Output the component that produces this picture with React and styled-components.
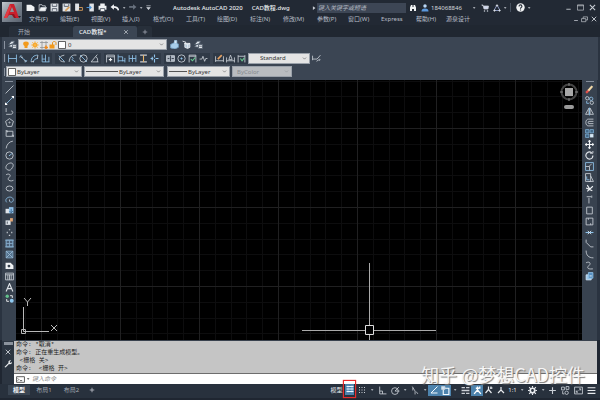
import React from "react";
import styled, { createGlobalStyle, css } from "styled-components";

const c = {
  frame: "#1f2631",
  title: "#222934",
  tabs: "#202731",
  panel: "#3b4553",
  rail: "#38424f",
  ink: "#c9ced5",
  blue: "#8fc3ea",
  dim: "#a3aab4",
  field: "#e4e4e4",
};

const Global = createGlobalStyle`
  *, *::before, *::after { box-sizing: border-box; }
  body { margin: 0; background: ${c.frame}; font-family: "Noto Sans", "Noto Sans CJK SC", sans-serif; }
  button, input, select { font: inherit; color: inherit; margin: 0; padding: 0; border: 0; background: none; border-radius: 0; outline: 0; }
`;

/* ---------- icon drawings, 16 x 16 grid ---------- */
const B = c.blue;
const glyphs = {
  caret: <path d="M5 6h7l-3.5 4z" fill="currentColor" stroke="none" />,
  chevron: <path d="M3 5l5 5 5-5" />,
  play: <path d="M5 3l7 5-7 5z" fill="currentColor" stroke="none" />,
  new: <path d="M1 3h8l6 4v7H1z" fill="#f0f2f4" stroke="none" />,
  open: <><path d="M2 13V3h5l1 2h5v3" /><path d="M2 14l3-6h10l-2 6z" fill="#f0f2f4" /></>,
  save: <><path d="M1 1h14v14H1z" fill="#dfe3e8" stroke="none" /><path d="M4 2v4h8V2M4 14v-4h8v4" stroke="#46505e" /></>,
  saveas: <><path d="M1 1h14v14H1z" fill="#dfe3e8" stroke="none" /><path d="M4 2v4h8V2" stroke="#46505e" /><path d="M6 14l7-7" stroke="#d9a15a" strokeWidth="3" /></>,
  mobileOpen: <><path d="M2 1h7v13H2z" fill="#dfe3e8" stroke="none" /><path d="M7 13h8V8H9" stroke="#e0a25c" /></>,
  mobileSave: <><path d="M6 1h8v14H6z" fill="#dfe3e8" stroke="none" /><path d="M1 8h8M6 5l3 3-3 3" stroke="#4c93d6" strokeWidth="2" /></>,
  print: <><path d="M4 1h8v4H4z M1 5h14v7H1z" fill="#f0f2f4" stroke="none" /><path d="M4 10h8v5H4z" fill="#fff" stroke="#46505e" /></>,
  undo: <><path d="M1 7l6-5v10z" fill="#f0f2f4" stroke="none" /><path d="M6 7c5 0 8 1 9 6" stroke="#f0f2f4" strokeWidth="3" /></>,
  redo: <><path d="M15 7L9 2v10z" fill="#69727f" stroke="none" /><path d="M10 7H2" stroke="#69727f" strokeWidth="3" /></>,
  customize: <path d="M3 4h10M4 8h8l-4 5z" fill="currentColor" />,
  binoculars: <path d="M2 14V7l2-5h3v4h2V2h3l2 5v7h-4v-4H6v4z" fill="#f0f2f4" stroke="none" />,
  user: <><circle cx="8" cy="4" r="3.5" fill="#b9d6f4" stroke="none" /><path d="M1 15c0-4 2-6 7-6s7 2 7 6z" fill="#5b98dd" stroke="none" /></>,
  cart: <><path d="M1 2h3l2 8h8l1-6H5" fill="#cfd8ee" /><circle cx="7" cy="14" r="1" /><circle cx="13" cy="14" r="1" /></>,
  a360: <><path d="M8 2l6 11H2z" stroke="#aab8e8" /><circle cx="8" cy="3" r="1.5" fill="#fff" /><circle cx="3" cy="13" r="1.5" fill="#fff" /><circle cx="13" cy="13" r="1.5" fill="#fff" /></>,
  help: <><circle cx="8" cy="8" r="7.5" fill="#f0f2f4" stroke="none" /><path d="M5.500 6c0-4 5-3 5 0 0 2-2.500 1.500-2.500 4M8 11.500v2" stroke="#222934" strokeWidth="2" /></>,
  min: <path d="M3 12h10" strokeWidth="2" />,
  max: <><path d="M1 2h14v12H1z" /><path d="M1 4h14" /></>,
  restore: <><path d="M5 6V2h10v7h-4" /><path d="M1 6h10v7H1z" /></>,
  close: <path d="M2 2l12 12M14 2L2 14" strokeWidth="2.4" />,
  x: <path d="M3 3l10 10M13 3L3 13" />,
  plus: <path d="M8 2v12M2 8h12" strokeWidth="2" />,
  layers: <><path d="M1 8l5-6h6l-4 6zM1 12l5-5h7l-5 6z" fill="#dce2e9" stroke="#515c6b" /><path d="M8 8h7v7H8z" fill="#eef1f4" stroke="#515c6b" /><path d="M9 11h5" stroke="#515c6b" /></>,
  bulb: <path d="M8 1c-8 0-6 7-3 9v4h6v-4c3-2 5-9-3-9z" fill="#f29a1c" stroke="none" />,
  sun: <><circle cx="8" cy="8" r="5" fill="#f5a11f" stroke="none" /><path d="M8 0v16M0 8h16M2 2l12 12M14 2L2 14" stroke="#f8b74f" /></>,
  viewport: <><path d="M4 0v16M12 0v16M0 3h16M0 13h16" stroke="#8b8f92" /><path d="M12 9v7M9 13h7" stroke="#f08a1d" strokeWidth="3" /></>,
  lock: <><path d="M7 8V4c0-4 7-4 7 0v4" stroke="#e7941c" strokeWidth="2" /><path d="M1 7h10v8H1z" fill="#f29a1c" stroke="none" /></>,
  swatch: <path d="M1 1h14v14H1z" fill="#fff" stroke="#333" />,
  layerA: <><path d="M1 8l6-3 8 2v6l-6 3-8-2z" fill="#a8cde9" stroke="#6f98b8" /><path d="M8 1h4v5H8z" fill="#dce8f2" stroke="#a8cde9" /></>,
  layerB: <><path d="M5 6h9v7l-4 2-5-2z" fill="#b4c7d8" stroke="#eef1f4" /><path d="M1 2l6 2-3 3M5 6l5 2 4-2M10 8v6" stroke="#eef1f4" /></>,
  dimLinear: <><path d="M1 1v14M15 1v14M1 8h14" stroke={B} /></>,
  dimAligned: <><path d="M1 6l3-4M11 15l3-4M3 5l10 8" stroke={B} /><path d="M3 5l4 1M13 13l-4-1" /></>,
  dimArc: <><path d="M2 14C2 6 7 2 14 2M6 15c0-4 3-7 8-7" stroke={B} /><path d="M2 14l5-1M14 2l-1 6" /></>,
  dimOrd: <><path d="M2 1v13h13M8 1v13M14 5v9M2 9h6" stroke={B} /></>,
  dimRadius: <><path d="M13 2C1 4 1 14 14 14" /><path d="M3 3l10 10" stroke={B} /></>,
  dimJog: <><path d="M2 14C3 5 7 1 15 2" /><path d="M6 4l3 4-2 2 6 4" stroke={B} /></>,
  dimDia: <><circle cx="8" cy="8" r="6.500" /><path d="M2 2l12 12" stroke={B} /></>,
  dimAngle: <path d="M13 1L2 14h13M10 5c4 1 4 6 3 9" />,
  dimQuick: <><path d="M1 15V2h14v13M1 5h14" /><path d="M8 7v6M5 10h6" stroke="#f0f2f4" strokeWidth="2" /></>,
  dimBase: <><path d="M2 1v14M14 7v8M2 5h8v8M2 12h12" stroke={B} /></>,
  dimCont: <><path d="M2 2v12M8 2v12M14 2v12M2 8h12" stroke={B} /></>,
  dimSpace: <><path d="M2 2h12M2 14h12" strokeWidth="2" /><path d="M8 2v12" stroke="#e8b56b" strokeWidth="2" /></>,
  dimBreak: <path d="M1 8h5M10 8h5M8 1v5M8 9v6M4 5v6" stroke={B} strokeWidth="2" />,
  tolerance: <><path d="M1 3h14v10H1z" fill="#aab3bf" /><path d="M8 3v10M10 8h4M3 8h3" stroke="#2c3440" /></>,
  center: <><circle cx="8" cy="8" r="6.500" /><path d="M8 6v4M6 8h4" stroke={B} /></>,
  inspect: <><path d="M2 15V2h12v13M2 4h12" /><path d="M5 9l3 3 5-6" stroke="#68c690" strokeWidth="2" /></>,
  jogged: <path d="M1 9h4l2-5 3 9 2-5h3" />,
  dimEdit: <><path d="M1 4v10M15 4v10M1 12h14" /><path d="M5 9l7-7" stroke="#e4a163" strokeWidth="3" /></>,
  dimText: <path d="M1 6v9M15 6v9M1 12h14M5 10l3-8 3 8z" />,
  dimUpdate: <><path d="M2 2v13M14 2v13M2 4h12" /><path d="M6 8l3 4 4-5" stroke="#68c690" strokeWidth="2" /></>,
  dimStyle: <path d="M1 3v8M1 9h8l6-7M8 13l6-4M13 12l2-2" />,
  line: <path d="M1 15L15 1" />,
  cline: <><path d="M1 15L15 1" stroke={B} /><path d="M1 12v3h3M12 1h3v3" stroke="#fff" strokeWidth="2.4" /></>,
  pline: <path d="M2 2v7M2 13h8c5 0 5-6 1-6" />,
  polygon: <><path d="M8 1l7 5-3 9H4L1 6z" /><circle cx="8" cy="8" r="1" /></>,
  rect: <path d="M2 4h12v9H2zM1 3h3v3M12 11h3v3" />,
  arc: <path d="M2 15C3 8 7 3 14 2" />,
  circle: <><circle cx="8" cy="8" r="6.500" /><path d="M8 8l5-4M7 8h2" stroke={B} /></>,
  revcloud: <path d="M5 14c-6-2-3-9 1-11 7-4 11 2 7 7-2 4-5 6-8 4z" />,
  spline: <path d="M2 3c6-3 10 1 5 5-4 4 2 8 8 5" />,
  ellipse: <ellipse cx="8" cy="8" rx="6" ry="4.500" />,
  earc: <><path d="M3 13C-2 7 7 1 13 5c5 5-2 11-5 6" stroke={B} /><path d="M8 8v3" /></>,
  insert: <><path d="M1 5h7v8H1z" fill="#dfe4ea" stroke="none" /><path d="M7 2h8v11H7z" fill="#8fc0e8" stroke="none" /><path d="M11 5v7M8 9l3 3 3-3" stroke="#38628a" /></>,
  block: <><path d="M1 6h9v8H1z" fill="#dfe4ea" stroke="none" /><path d="M4 8v4" stroke="#38424f" /><path d="M9 2h5v6H9z" fill="#e2a676" stroke="none" /></>,
  point: <path d="M8 2v2M3 8h2M11 8h2M8 12v2" strokeWidth="2.4" />,
  hatch: <><path d="M2 2h12v12H2z" fill="#4c6078" stroke={B} /><path d="M2 8h12M8 2v12M0 2h16M0 14h16" stroke="#86abc9" /></>,
  gradient: <><path d="M2 2h12v12H2z" fill="#54738f" stroke="#86abc9" /><path d="M2 2l12 12M14 2L2 14" stroke="#9fbdd5" /></>,
  region: <><path d="M1 3h9l5 5v6H1z" fill="#f0f2f4" stroke="none" /><circle cx="7" cy="9" r="2.500" fill="#38424f" stroke="none" /></>,
  table: <path d="M1 2h14v12H1zM1 5h14M5 5v9M8 5v9M11 5v9" />,
  mtext: <path d="M2 15L8 1l6 14M4 10h8" stroke="#dfe3e8" strokeWidth="2" />,
  addsel: <><circle cx="4" cy="4" r="3" fill="#63c18b" stroke="none" /><circle cx="12" cy="12" r="3.500" fill="#8fc8f0" stroke="none" /><path d="M9 3h4v4M3 9v4h4" stroke="#fff" /></>,
  erase: <><path d="M2 14l5-5" stroke="#e0524b" strokeWidth="4" /><path d="M6 10l7-8" stroke="#f2d9a8" strokeWidth="4" /></>,
  copy: <><circle cx="4" cy="4" r="3" /><circle cx="11" cy="5" r="3" stroke={B} /><circle cx="12" cy="12" r="3" /><path d="M3 9v4h4" stroke={B} /></>,
  mirror: <><path d="M7 2v11H1zM9 2l6 11H9z" /><path d="M8 1v14" stroke={B} /></>,
  offset: <path d="M15 2H6c-6 0-6 12 0 12h9M15 6H7c-2 0-2 4 0 4h8" />,
  array: <><path d="M1 1h6v6H1zM9 1h6v6H9zM1 9h6v6H1z" fill="#426786" stroke="#79a9cd" /><path d="M9 9h6v6H9z" fill="#d5e7f5" stroke="none" /></>,
  move: <path d="M8 1v14M1 8h14M6 3l2-2 2 2M6 13l2 2 2-2M3 6L1 8l2 2M13 6l2 2-2 2" stroke="#f4f6f8" strokeWidth="2" />,
  rotate: <><path d="M12 3C6-1 0 5 2 10c3 7 12 5 12-2" stroke="#dfe3e8" strokeWidth="2" /><path d="M9 4h5V0" stroke="#dfe3e8" /></>,
  scale: <><path d="M1 1h14v14H1z" stroke={B} /><path d="M1 8h7v7M7 8l5-5" /></>,
  stretch: <><path d="M1 1h9v14H1zM10 5l5 10H6" /><path d="M3 6v6h5" stroke={B} /></>,
  trim: <path d="M4 2l5 8M14 4L4 13M2 7l11 5" stroke="#edf0f3" strokeWidth="2" />,
  extend: <path d="M3 3h8M12 1v4M7 5v10" />,
  breakPt: <path d="M3 2h10v12H3z" />,
  breakAt: <path d="M2 2h12v12H2zM6 2v3M10 11v3" />,
  join: <><path d="M1 8h14" stroke={B} strokeWidth="2" /><path d="M5 5l3 3-3 3M11 5L8 8l3 3" stroke="#dfe9f2" /></>,
  chamfer: <path d="M2 1v5l8 8h5" />,
  fillet: <path d="M2 1c0 8 4 13 13 13" />,
  blend: <path d="M2 3c7-3 9 2 5 5-4 4-3 7 7 6" />,
  explode: <><path d="M2 5h9v9H2z" fill="#9dc8ea" stroke="#cfe4f5" /><path d="M6 1h8v10H6z" fill="#558fc0" stroke={B} /><path d="M8 7h4" stroke="#fff" /></>,
  wrench: <path d="M1 14l8-8c-1-4 2-6 5-5l-3 3 2 2 3-2c0 4-3 5-6 4l-7 7z" fill="#f0f2f4" stroke="none" />,
  prompt: <><path d="M1 3h14v10H1z" stroke="#444" /><path d="M3 6l2 2-2 2M7 10h4" stroke="#444" /></>,
  sGrid: <><path d="M4 1v14M12 1v14" stroke="#9cc6e6" /><path d="M1 3h14M1 8h14M1 13h14" stroke="#edf7fe" strokeWidth="2" /></>,
  sSnap: <path d="M2 3h2M7 3h2M12 3h2M2 8h2M7 8h2M12 8h2M2 13h2M7 13h2M12 13h2" strokeWidth="2" />,
  sOrtho: <path d="M3 1v13h12M3 9h5v5" />,
  sPolar: <><circle cx="7" cy="9" r="6" /><path d="M7 9l7-7M7 9h8" /></>,
  sIso: <path d="M4 1l5 8v6M5 3v5M11 10l3 4" strokeWidth="1.400" />,
  sTrack: <path d="M15 1L2 14h13" stroke="#f3faff" strokeWidth="2" />,
  sOsnap: <><path d="M4 4h10v11H4z" stroke="#f3faff" strokeWidth="2" /><path d="M1 1h6v5H1z" fill="#cfe8fb" /></>,
  sLwt: <path d="M1 3h6M9 3h6M1 8h14M1 13h6M9 13h6" strokeWidth="2.400" />,
  sAnnoA: <path d="M8 1v6L2 14M8 7l6 7M5 4h6M12 1v4" stroke="#fff" strokeWidth="2.400" />,
  sAnnoB: <path d="M7 1v6L1 14M7 7l6 7M12 1v5M10 4h5" stroke="#e7eaee" strokeWidth="2.400" />,
  sAnnoC: <path d="M8 2v6L2 14M8 8l6 6" stroke="#e7eaee" strokeWidth="2.400" />,
  gear: <><circle cx="8" cy="8" r="4" stroke="#e7eaee" strokeWidth="3" /><path d="M8 0v3M8 13v3M0 8h3M13 8h3M2 2l3 3M11 11l3 3M14 2l-3 3M5 11l-3 3" stroke="#e7eaee" strokeWidth="2" /></>,
  isolate: <><path d="M1 2h5v5H1zM9 1h5v5H9z" /><circle cx="10" cy="12" r="3" /><path d="M3 9v5h3" /></>,
  full: <path d="M1 2h14v12H1zM9 5h3v3M7 11H4V8M12 5L9 8M4 11l3-3" />,
  menu: <path d="M1 3h14M1 8h14M1 13h14" stroke="#e7eaee" strokeWidth="2" />,
};

const Svg = styled.svg`
  display: block;
  flex: none;
  width: ${(p) => p.$size}px;
  height: ${(p) => p.$size}px;
  fill: none;
  stroke: currentColor;
  stroke-width: 1.5;
`;
const Icon = ({ name, size = 9 }) => (
  <Svg $size={size} viewBox="0 0 16 16" aria-hidden="true">{glyphs[name]}</Svg>
);

const IconButton = styled.button`
  display: flex;
  align-items: center;
  justify-content: center;
  flex: none;
  width: ${(p) => p.$w || 12}px;
  height: ${(p) => p.$h || 11}px;
  color: ${(p) => p.$color || c.ink};
  background: ${(p) => (p.$on ? "#4d83ad" : "none")};
`;
const Tool = ({ name, size, w, h, on, color }) => (
  <IconButton type="button" aria-label={name} $w={w} $h={h} $on={on} $color={color}>
    <Icon name={name} size={size} />
  </IconButton>
);

/* ---------- frame ---------- */
const Window = styled.div`
  min-height: 100vh;
  display: grid;
  grid-template-rows: auto auto 1fr auto auto;
  background: ${c.frame};
  color: ${c.ink};
  font-size: 6px;
  line-height: 8px;
  overflow: hidden;
`;

const Header = styled.header`
  display: grid;
  grid-template-columns: 20px minmax(0, 1fr);
  padding: 2px 2px 0;
  background: ${c.title};
`;
const Logo = styled.button`
  display: block;
  height: 20px;
  background: linear-gradient(135deg, #c3c8ce, #7c8590 50%, #58616e);
  svg { display: block; width: 20px; height: 20px; }
`;
const HeaderRows = styled.div`
  display: grid;
  grid-template-rows: 11px 12px;
  padding-left: 2px;
`;
const Row = styled.div`
  display: flex;
  align-items: center;
  min-width: 0;
`;
const QuickAccess = styled(Row)`
  width: 149px;
`;
const Title = styled.h1`
  display: flex;
  gap: 9px;
  margin: 0;
  font-size: 6px;
  font-weight: 500;
  line-height: 8px;
  white-space: nowrap;
  color: #e6e9ed;
  width: 138px;
`;
const SearchBox = styled.input`
  width: 89px;
  height: 10px;
  padding: 0 1px;
  font-size: 6px;
  font-style: italic;
  background: #3d4655;
  &::placeholder { color: #b4bac3; opacity: 1; }
`;
const Account = styled.button`
  width: 38px;
  text-align: left;
  font-size: 6px;
  color: #d5d9de;
`;
const Divider = styled.span`
  width: 1px;
  height: 9px;
  margin: 0 3px;
  background: #46505e;
`;
const Push = styled(Row)`
  margin-left: auto;
`;
const MenuBar = styled.nav`
  display: flex;
  align-items: center;
  padding-left: 5px;
`;
const MenuItem = styled.button`
  width: ${(p) => p.$w}px;
  text-align: left;
  white-space: nowrap;
  font-size: 6px;
  color: #b9bfc8;
`;

const FileTabs = styled.div`
  display: flex;
  align-items: flex-end;
  height: 12px;
  padding-left: 9px;
  background: ${c.tabs};
`;
const FileTab = styled.button`
  display: flex;
  align-items: center;
  justify-content: space-between;
  height: 11px;
  width: ${(p) => p.$w || 64}px;
  padding: 0 8px 0 ${(p) => (p.$active ? 6 : 9)}px;
  border-radius: 2px 2px 0 0;
  background: ${(p) => (p.$active ? c.panel : "#272f3a")};
  color: ${(p) => (p.$active ? "#eceff2" : c.dim)};
  font-weight: ${(p) => (p.$active ? 500 : 400)};
`;
const NewTab = styled(FileTab)`
  justify-content: center;
  padding: 0;
`;

const Toolbars = styled.div`
  padding: 1px 2px 2px;
  background: ${c.panel};
  border-left: 2px solid #2a3340;
  border-right: 2px solid #2a3340;
`;
const ToolRow = styled(Row)`
  height: ${(p) => p.$h}px;
`;
const Group = styled.div`
  display: flex;
  align-items: center;
  padding: 0 1px;
  background: #303a47;
  & + & { margin-left: 3px; }
`;
const Grip = styled.span`
  flex: none;
  width: 1px;
  height: 8px;
  margin-right: 1px;
  background: #8b93a0;
`;
const Field = styled.label`
  display: flex;
  align-items: center;
  flex: none;
  width: ${(p) => p.$w}px;
  height: 11px;
  margin-right: ${(p) => p.$gap || 0}px;
  padding: 0 2px 0 ${(p) => p.$pad || 1}px;
  gap: 1px;
  color: #333;
  background: ${c.field};
  border: 1px solid #9aa1aa;
  ${(p) => p.$off && css`background: #b9bcc0; color: #85898e;`}
`;
const Select = styled.select`
  appearance: none;
  flex: 1;
  min-width: 0;
  height: 9px;
  font-size: 6px;
  line-height: 8px;
  color: inherit;
  opacity: 1;
`;
const Stroke = styled.span`
  width: ${(p) => p.$w}px;
  height: 1px;
  background: #555;
`;
const LayerFlags = styled.span`
  display: flex;
  gap: 1px;
  padding: 0 1px 0 2px;
`;

/* ---------- workspace ---------- */
const Workspace = styled.main`
  display: grid;
  grid-template-columns: 16px minmax(0, 1fr) 18px;
  background: ${c.rail};
`;
const Rail = styled.aside`
  display: flex;
  flex-direction: column;
  align-items: center;
  padding-top: 1px;
  border: solid #2a3340;
  border-width: 0 ${(p) => (p.$right ? 3 : 0)}px 0 ${(p) => (p.$right ? 0 : 2)}px;
  background: ${c.rail};
`;
const RailGrip = styled.span`
  width: 8px;
  height: 1px;
  margin: 0 0 2px;
  background: #858e9b;
`;
const Canvas = styled.section`
  position: relative;
  overflow: hidden;
  background: #000;
`;
const Grid = styled.svg`
  position: absolute;
  inset: 0;
  width: 100%;
  height: 100%;
`;
const Ucs = styled.svg`
  position: absolute;
  left: 4px;
  bottom: 4px;
  width: 40px;
  height: 42px;
`;
const Crosshair = styled.svg`
  position: absolute;
  left: 286px;
  bottom: 0;
  width: 135px;
  height: 77px;
`;
const ViewCube = styled.svg`
  position: absolute;
  right: 3px;
  top: 2px;
  width: 20px;
  height: 29px;
`;

/* ---------- command window ---------- */
const Command = styled.section`
  position: relative;
  display: grid;
  grid-template-columns: 12px minmax(0, 1fr);
  margin: 0 3px 0 2px;
  border-top: 1px solid #39424e;
`;
const CommandSide = styled.div`
  display: flex;
  flex-direction: column;
  align-items: center;
  gap: 1px;
  padding-top: 1px;
  background: #2c3541;
`;
const SideGrip = styled.span`
  width: 9px;
  height: 3px;
  background: #8b929c;
`;
const History = styled.pre`
  margin: 0;
  padding: 0 2px;
  height: 32px;
  font-family: "Liberation Mono", "Noto Sans CJK SC", monospace;
  font-size: 6px;
  line-height: 8px;
  color: #222;
  background: #c5c5c5;
  overflow: hidden;
`;
const Prompt = styled.label`
  display: flex;
  align-items: center;
  height: 11px;
  padding-left: 2px;
  border-top: 1px solid #6d6d6d;
  background: #fff;
  color: #444;
`;
const PromptInput = styled.input`
  flex: 1;
  height: 9px;
  padding-left: 1px;
  font-size: 6px;
  font-style: italic;
  &::placeholder { color: #888; opacity: 1; }
`;
const Watermark = styled.div`
  position: absolute;
  right: 12px;
  bottom: 0;
  font-family: "Noto Sans CJK SC", sans-serif;
  font-size: 18px;
  line-height: 20px;
  white-space: nowrap;
  color: #f5f5f5;
  text-shadow: 1px 1px 1px #777;
  pointer-events: none;
`;

/* ---------- status bar ---------- */
const Status = styled.footer`
  display: flex;
  align-items: flex-start;
  justify-content: space-between;
  height: 16px;
  padding: 0 3px 0 8px;
  background: #28313d;
  border-bottom: 2px solid ${c.frame};
`;
const LayoutTab = styled.button`
  width: ${(p) => p.$w}px;
  height: 10px;
  color: ${(p) => (p.$active ? "#f3f5f7" : c.dim)};
  font-weight: ${(p) => (p.$active ? 700 : 400)};
  background: ${(p) => (p.$active ? "#3a4552" : "none")};
`;
const StatusText = styled.button`
  width: ${(p) => p.$w}px;
  white-space: nowrap;
  color: #e7eaee;
`;
const Marked = styled.span`
  display: flex;
  flex: none;
  align-items: center;
  justify-content: center;
  width: 13px;
  height: 18px;
  margin: -4px 0 -2px;
  outline: 1px solid #e82c2c;
  outline-offset: -1px;
  box-shadow: 0 0 1px #e82c2c;
  z-index: 1;
`;

const quick = ["new", "open", "save", "saveas", "mobileOpen", "mobileSave", "print"];
const menus = [["文件(F)", 31], ["编辑(E)", 31], ["视图(V)", 31], ["插入(I)", 31], ["格式(O)", 33], ["工具(T)", 31], ["绘图(D)", 33], ["标注(N)", 33], ["修改(M)", 34], ["参数(P)", 31], ["窗口(W)", 33], ["Express", 35], ["帮助(H)", 30], ["源泉设计", 30]];
const dims = [
  ["dimLinear", "dimAligned", "dimArc", "dimOrd"],
  ["dimRadius", "dimJog", "dimDia", "dimAngle"],
  ["dimQuick", "dimBase", "dimCont", "dimSpace", "dimBreak"],
  ["tolerance", "center", "inspect", "jogged"],
  ["dimEdit", "dimText", "dimUpdate"],
];
const draw = ["line", "cline", "pline", "polygon", "rect", "arc", "circle", "revcloud", "spline", "ellipse", "earc", "insert", "block", "point", "hatch", "gradient", "region", "table", "mtext", "addsel"];
const modify = ["erase", "copy", "mirror", "offset", "array", "move", "rotate", "scale", "stretch", "trim", "extend", "breakPt", "breakAt", "join", "chamfer", "fillet", "blend", "explode"];

const Dropdown = ({ label, value, w, gap, pad, off, children }) => (
  <Field $w={w} $gap={gap} $pad={pad} $off={off}>
    {children}
    <Select aria-label={label} disabled={off} defaultValue={value}>
      <option>{value}</option>
    </Select>
    <Icon name="chevron" size={5} />
  </Field>
);

const minor = [1, 2, 3, 4, 0];

export default function App() {
  return (
    <>
      <Global />
      <Window>
        <Header>
          <Logo type="button" aria-label="应用程序菜单">
            <svg viewBox="0 0 20 20">
              <path d="M2 16L8 2h4l5 14h-4l-1-3H7l-2 3z" fill="#c91f2c" />
              <path d="M8 10l2-5 2 5z" fill="#8d9098" />
              <path d="M2 16L8 2l1 3-4 11z" fill="#e23b43" />
              <path d="M7 12h5l2 4h-2l-2-3z" fill="#90131d" />
              <path d="M16 14h3l-1.500 2z" fill="#20262f" />
            </svg>
          </Logo>
          <HeaderRows>
            <Row>
              <QuickAccess>
                {quick.map((n) => <Tool key={n} name={n} />)}
                <Tool name="undo" w={13} />
                <Tool name="caret" size={6} w={5} />
                <Tool name="redo" w={12} />
                <Tool name="caret" size={6} w={6} />
                <Tool name="customize" size={7} w={9} />
              </QuickAccess>
              <Title><span>Autodesk AutoCAD 2020</span><span>CAD教程.dwg</span></Title>
              <Tool name="play" size={6} w={6} />
              <SearchBox type="search" aria-label="搜索" placeholder="键入关键字或短语" />
              <Tool name="binoculars" size={8} w={13} />
              <Tool name="user" size={8} w={12} />
              <Account type="button">184068846</Account>
              <Tool name="caret" size={6} w={10} />
              <Tool name="cart" size={8} w={12} />
              <Tool name="a360" size={8} w={11} />
              <Tool name="caret" size={6} w={5} />
              <Divider />
              <Tool name="help" w={12} />
              <Tool name="caret" size={6} w={5} />
              <Push>
                <Tool name="min" size={7} />
                <Tool name="max" size={7} />
                <Tool name="close" size={7} />
              </Push>
            </Row>
            <Row>
              <MenuBar>
                {menus.map(([m, w]) => <MenuItem type="button" key={m} $w={w}>{m}</MenuItem>)}
              </MenuBar>
              <Push>
                <Tool name="min" size={6} w={9} />
                <Tool name="restore" size={7} w={9} />
                <Tool name="close" size={6} w={9} />
              </Push>
            </Row>
          </HeaderRows>
        </Header>

        <div>
          <FileTabs>
            <FileTab type="button">开始</FileTab>
            <FileTab type="button" $active>CAD教程* <Icon name="x" size={6} /></FileTab>
            <NewTab type="button" $w={15} aria-label="新图形"><Icon name="plus" size={6} /></NewTab>
          </FileTabs>
          <Toolbars>
            <ToolRow $h={13}>
              <Grip />
              <Tool name="layers" />
              <Dropdown label="图层" value="0" w={149} gap={1}>
                <LayerFlags>
                  {["bulb", "sun", "viewport", "lock", "swatch"].map((n) => <Icon key={n} name={n} size={8} />)}
                </LayerFlags>
              </Dropdown>
              <Tool name="layerA" /><Tool name="layerB" /><Tool name="layers" />
            </ToolRow>
            <ToolRow $h={14}>
              <Grip />
              {dims.map((g) => (
                <Group key={g[0]}>{g.map((n) => <Tool key={n} name={n} w={11} />)}</Group>
              ))}
              <Dropdown label="标注样式" value="Standard" w={62} pad={11} gap={1} />
              <Tool name="dimStyle" w={11} />
            </ToolRow>
            <ToolRow $h={13}>
              <Grip />
              <Dropdown label="颜色" value="ByLayer" w={76} gap={2}><Icon name="swatch" size={8} /></Dropdown>
              <Dropdown label="线型" value="ByLayer" w={80} gap={3}><Stroke $w={32} /></Dropdown>
              <Dropdown label="线宽" value="ByLayer" w={63} gap={2}><Stroke $w={18} /></Dropdown>
              <Dropdown label="打印样式" value="ByColor" w={60} pad={4} off />
            </ToolRow>
          </Toolbars>
        </div>

        <Workspace>
          <Rail>
            <RailGrip />
            {draw.map((n) => <Tool key={n} name={n} />)}
          </Rail>
          <Canvas aria-label="绘图区">
            <Grid>
              <defs>
                <pattern id="grid" x="25" y="48" width="79" height="79" patternUnits="userSpaceOnUse">
                  {minor.map((i) => (
                    <path key={i} d={`M${Math.round(i * 15.8) + 0.5} 0v79M0 ${Math.round(i * 15.8) + 0.5}h79`} stroke={i ? "#0d0d0e" : "#202021"} />
                  ))}
                </pattern>
              </defs>
              <rect width="100%" height="100%" fill="url(#grid)" />
            </Grid>
            <Ucs viewBox="0 0 40 42" fill="none" stroke="#b9b9b9">
              <path d="M1.500 35.500h4v4h-4zM3.500 37.500V13M3.500 37.500H29" />
              <path d="M4 4l3.500 4 3.500-4M7.500 8v4M31 31l6 6M37 31l-6 6" />
            </Ucs>
            <Crosshair viewBox="0 0 135 77" fill="none" stroke="#aaa">
              <path d="M67.500 0v62M67.500 72v5M0 67.500h63M72 67.500h62" />
              <path d="M63.500 62.500h8v9h-8z" stroke="#ddd" />
            </Crosshair>
            <ViewCube viewBox="0 0 20 29">
              <circle cx="10" cy="10" r="7.500" fill="none" stroke="#444" strokeWidth="2" />
              <path d="M10 1v3M10 16v3M1 10h3M16 10h3" stroke="#888" />
              <rect x="6" y="6" width="8" height="8" fill="#a9a9a9" />
              <rect x="5" y="23" width="10" height="4" rx="2" fill="#9a9a9a" />
            </ViewCube>
          </Canvas>
          <Rail $right>
            <RailGrip />
            {modify.map((n) => <Tool key={n} name={n} />)}
          </Rail>
        </Workspace>

        <Command>
          <CommandSide>
            <SideGrip />
            <Tool name="close" size={6} />
            <Tool name="wrench" size={8} />
          </CommandSide>
          <div>
            <History>{"命令: *取消*\n命令: 正在重生成模型。\n <栅格 关>\n命令:  <栅格 开>"}</History>
            <Prompt>
              <Icon name="prompt" size={9} />
              <Icon name="caret" size={6} />
              <PromptInput aria-label="命令" placeholder="键入命令" />
            </Prompt>
          </div>
          <Watermark>知乎 @梦想CAD控件</Watermark>
        </Command>

        <Status>
          <Row>
            <LayoutTab type="button" $active $w={22}>模型</LayoutTab>
            <LayoutTab type="button" $w={28}>布局1</LayoutTab>
            <LayoutTab type="button" $w={27}>布局2</LayoutTab>
            <Tool name="plus" size={6} w={14} />
          </Row>
          <Row>
            <StatusText type="button" $w={13}>模型</StatusText>
            <Marked><Tool name="sGrid" size={8} w={9} h={11} on /></Marked>
            <Tool name="sSnap" size={8} />
            <Tool name="caret" size={6} w={8} />
            <Tool name="sOrtho" size={9} w={13} />
            <Tool name="sPolar" size={9} w={12} />
            <Tool name="caret" size={6} w={7} />
            <Tool name="sIso" size={9} w={13} />
            <Tool name="caret" size={6} w={7} />
            <Tool name="sTrack" size={8} w={11} on />
            <Tool name="sOsnap" size={9} w={12} on />
            <Tool name="caret" size={6} w={8} />
            <Tool name="sLwt" size={9} w={12} />
            <Tool name="sAnnoA" size={9} w={12} on />
            <Tool name="sAnnoB" size={8} />
            <Tool name="sAnnoC" size={8} />
            <StatusText type="button" $w={11}>1:1</StatusText>
            <Tool name="caret" size={6} w={7} />
            <Tool name="gear" size={9} w={14} />
            <Tool name="caret" size={6} w={7} />
            <Tool name="plus" size={9} w={12} />
            <Tool name="isolate" size={9} w={14} />
            <Tool name="full" size={9} w={13} />
            <Tool name="menu" size={9} w={12} />
          </Row>
        </Status>
      </Window>
    </>
  );
}
